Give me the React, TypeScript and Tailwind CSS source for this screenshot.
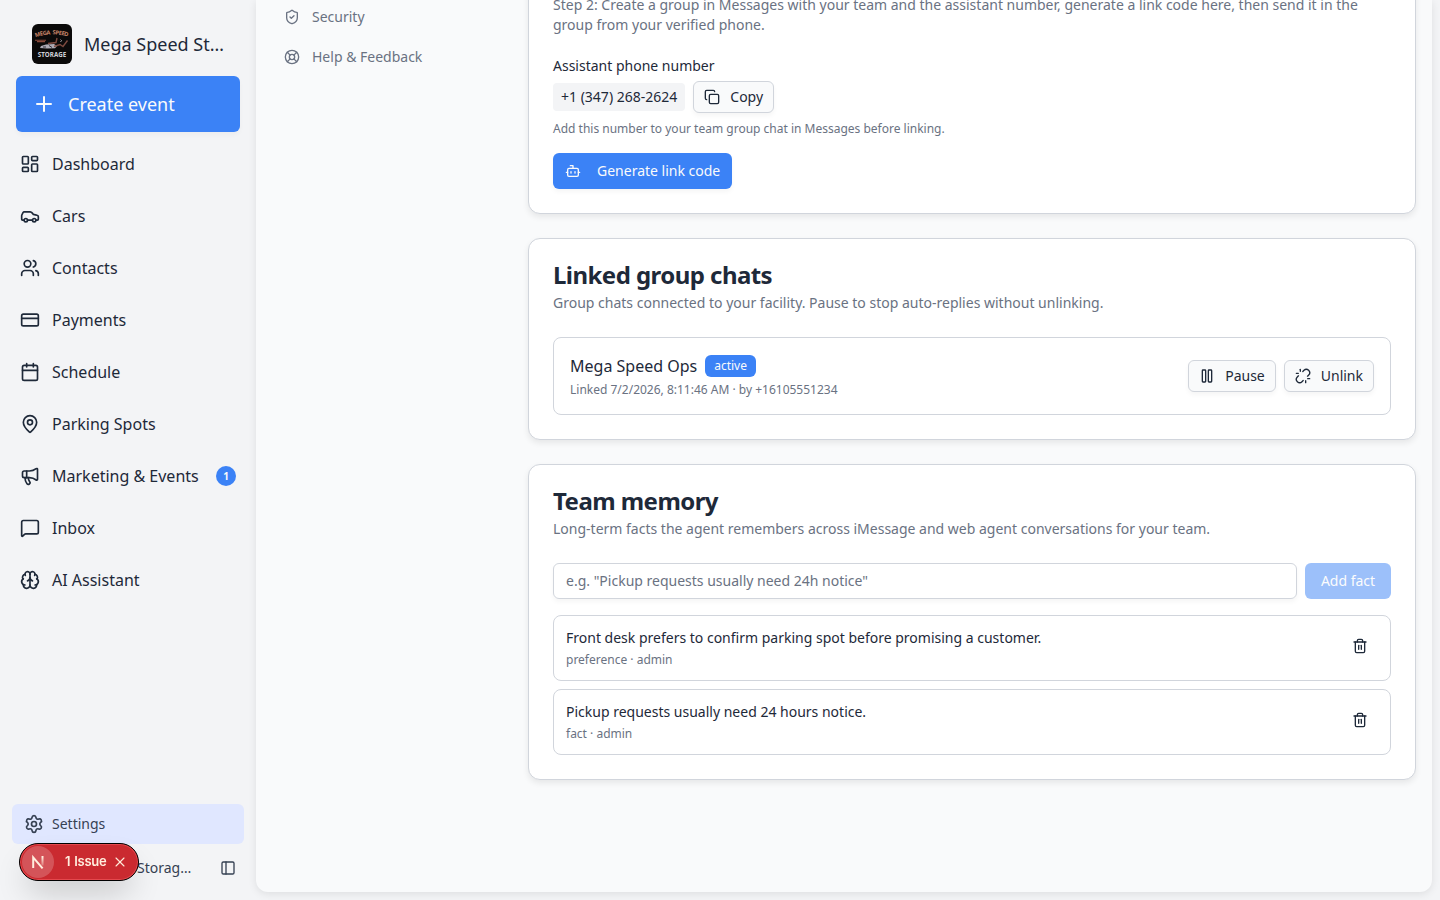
import {
  Bot,
  Brain,
  Calendar,
  Car,
  Copy,
  CreditCard,
  LayoutDashboard,
  LifeBuoy,
  MapPin,
  Megaphone,
  MessageSquare,
  PanelLeft,
  Pause,
  Plus,
  Settings,
  ShieldCheck,
  Trash2,
  Unlink,
  Users,
  X,
} from "lucide-react";
import type { ReactNode } from "react";

const NAV = [
  { label: "Dashboard", icon: LayoutDashboard },
  { label: "Cars", icon: Car },
  { label: "Contacts", icon: Users },
  { label: "Payments", icon: CreditCard },
  { label: "Schedule", icon: Calendar },
  { label: "Parking Spots", icon: MapPin },
  { label: "Marketing & Events", icon: Megaphone, badge: 1 },
  { label: "Inbox", icon: MessageSquare },
  { label: "AI Assistant", icon: Brain },
];

const FACTS = [
  {
    text: "Front desk prefers to confirm parking spot before promising a customer.",
    meta: "preference · admin",
  },
  { text: "Pickup requests usually need 24 hours notice.", meta: "fact · admin" },
];

function FacilityLogo() {
  return (
    <svg viewBox="0 0 40 40" className="size-10 shrink-0 rounded-md bg-[#0b0a0a]">
      <defs>
        <path id="arch" d="M3.5 13.3 Q20 7.5 38 13.3" />
      </defs>
      <text
        fontSize="5.8"
        fontWeight="700"
        fill="#c58468"
        fontFamily="Noto Sans"
        textLength="33"
        lengthAdjust="spacing"
        wordSpacing="1.5"
      >
        <textPath href="#arch">MEGA SPEED</textPath>
      </text>
      <path d="M3 16.3h11M5 17.6h8" stroke="#8a4a3a" strokeWidth="1.1" />
      <path d="M8 24l1-2 5-1.5 8-.5 3 2-2 2.2-8 .3z" fill="#aeabb5" />
      <path d="M11 23h3M17 21.5l3 2" stroke="#33313a" strokeWidth="1" />
      <path d="M16 19.5l8-1 1-4.5M22 22.5l6-2 3 2 4.5-6" stroke="#7d4a3f" strokeWidth="1.4" fill="none" />
      <path d="M28.5 15.5l1 1-1 1.5" stroke="#c9c6cd" strokeWidth=".8" fill="none" />
      <text
        x="20"
        y="32.8"
        textAnchor="middle"
        textLength="28.5"
        fontSize="6.2"
        fontWeight="700"
        fill="#d0d1d8"
        fontFamily="Noto Sans"
      >
        STORAGE
      </text>
    </svg>
  );
}

function Sidebar() {
  return (
    <aside className="flex w-64 shrink-0 flex-col">
      <div className="flex items-center gap-3 pt-6 pl-8">
        <FacilityLogo />
        <span className="w-[140px] truncate text-lg">Mega Speed Storage</span>
      </div>
      <button className="mx-4 mt-3 flex h-14 items-center gap-3 rounded-md bg-[#3b82f6] pl-4 text-lg text-gray-50 shadow-[0_3px_5px_rgba(0,0,0,0.03)]">
        <Plus className="size-6" />
        Create event
      </button>
      <nav className="mt-1.5 flex flex-col">
        {NAV.map(({ label, icon: Icon, badge }) => (
          <a key={label} className="flex h-13 items-center gap-3 pr-5 pl-5 text-base">
            <Icon className="size-5" />
            <span className="flex-1 whitespace-nowrap">{label}</span>
            {badge && (
              <span className="flex size-5 items-center justify-center rounded-full bg-[#3b82f6] text-[10px] font-bold text-gray-50">
                {badge}
              </span>
            )}
          </a>
        ))}
      </nav>
      <div className="mt-auto mb-2">
        <a className="mx-3 flex h-10 items-center gap-2 rounded-md bg-indigo-100 pl-3 text-sm text-gray-700">
          <Settings className="size-5" />
          Settings
        </a>
        <div className="flex h-12 items-center justify-between pr-5 pl-[137px]">
          <span className="text-sm whitespace-nowrap text-gray-700">Storag…</span>
          <PanelLeft className="size-4 text-gray-700" />
        </div>
      </div>
    </aside>
  );
}

function OutlineButton({ children }: { children: ReactNode }) {
  return (
    <button className="flex h-8 items-center gap-2 rounded-md border border-gray-300 bg-gray-50 px-2.5 text-sm shadow-[0_3px_5px_rgba(0,0,0,0.04)]">
      {children}
    </button>
  );
}

function CardHeader({ title, description }: { title: string; description: string }) {
  return (
    <div className="mb-6 flex flex-col gap-1.5">
      <h2 className="text-2xl leading-none font-bold tracking-[-0.023em]">{title}</h2>
      <p className="text-sm text-gray-500">{description}</p>
    </div>
  );
}

function Card({ children }: { children: ReactNode }) {
  return (
    <section className="rounded-xl border border-gray-300 bg-white p-6 shadow-[0_3px_6px_rgba(0,0,0,0.08)]">
      {children}
    </section>
  );
}

// Next.js dev overlay indicator
function IssuePill() {
  return (
    <div className="fixed bottom-[19px] left-[19px] flex h-[38px] w-[120px] items-center rounded-full border border-black bg-[#ca2a30] pl-[2px] font-['Inter'] text-[13px] font-semibold text-[#ffeede] shadow-[inset_0_0_0_1px_#e5484d,0_16px_32px_-8px_rgba(0,0,0,0.24)]">
      <span className="flex size-8 items-center justify-center rounded-full bg-white/20">
        <svg viewBox="0 0 16 16" fill="none" className="size-4">
          <defs>
            <linearGradient id="nStem" x1="12" y1="3" x2="12" y2="13" gradientUnits="userSpaceOnUse">
              <stop stopColor="#ffeede" />
              <stop offset="1" stopColor="#ffeede" stopOpacity="0.1" />
            </linearGradient>
          </defs>
          <path d="M3.2 14V3.4L12.6 14.4" stroke="#ffeede" strokeWidth="2" />
          <path d="M12.5 2v9.5" stroke="url(#nStem)" strokeWidth="2" />
        </svg>
      </span>
      <span className="ml-[11px] w-[42px] whitespace-nowrap tracking-[-0.02em] [word-spacing:1px]">1 Issue</span>
      <X className="ml-[5px] size-4" strokeWidth={1.6} />
    </div>
  );
}

export default function App() {
  return (
    <div className="flex h-screen overflow-hidden bg-gray-100 font-['Noto_Sans',sans-serif] text-gray-800">
      <Sidebar />
      <main className="mr-2 mb-2 flex flex-1 rounded-b-xl bg-gray-50 shadow-[0_2px_8px_rgba(0,0,0,0.09)]">
        <nav className="flex w-[272px] shrink-0 flex-col gap-5 pt-[7px] pl-7 text-sm text-gray-500">
          <a className="flex items-center gap-3">
            <ShieldCheck className="size-4" />
            Security
          </a>
          <a className="flex items-center gap-3">
            <LifeBuoy className="size-4" />
            Help &amp; Feedback
          </a>
        </nav>

        <div className="-mt-[30px] flex w-[888px] flex-col gap-6">
          <Card>
            <p className="text-sm text-gray-500">
              Step 2: Create a group in Messages with your team and the assistant number, generate a link code
              here, then send it in the group from your verified phone.
            </p>
            <p className="mt-[21px] text-sm">Assistant phone number</p>
            <div className="mt-[5px] flex items-center gap-2">
              <span className="rounded bg-gray-100 px-2 py-1 text-sm">+1 (347) 268-2624</span>
              <OutlineButton>
                <Copy className="mr-0.5 size-4" />
                Copy
              </OutlineButton>
            </div>
            <p className="mt-2 text-xs text-gray-500">
              Add this number to your team group chat in Messages before linking.
            </p>
            <button className="mt-4 flex h-9 items-center rounded-md bg-[#3b82f6] px-3 text-sm text-gray-50 shadow-[0_3px_5px_rgba(0,0,0,0.04)]">
              <Bot className="mr-4 size-4" />
              Generate link code
            </button>
          </Card>

          <Card>
            <CardHeader
              title="Linked group chats"
              description="Group chats connected to your facility. Pause to stop auto-replies without unlinking."
            />
            <div className="flex items-center justify-between rounded-lg border border-gray-300 p-4">
              <div>
                <div className="flex items-center gap-2">
                  <span className="text-base">Mega Speed Ops</span>
                  <span className="rounded-md bg-[#3b82f6] px-[9px] py-[3px] text-xs text-gray-50">active</span>
                </div>
                <p className="mt-1 text-xs text-gray-500">Linked 7/2/2026, 8:11:46 AM · by +16105551234</p>
              </div>
              <div className="flex gap-2">
                <OutlineButton>
                  <Pause className="mr-0.5 size-4" />
                  Pause
                </OutlineButton>
                <OutlineButton>
                  <Unlink className="mr-0.5 size-4" />
                  Unlink
                </OutlineButton>
              </div>
            </div>
          </Card>

          <Card>
            <CardHeader
              title="Team memory"
              description="Long-term facts the agent remembers across iMessage and web agent conversations for your team."
            />
            <div className="flex gap-2">
              <input
                className="h-9 flex-1 rounded-md border border-gray-300 px-3 pb-0.5 text-sm shadow-[0_3px_5px_rgba(0,0,0,0.04)] placeholder:text-gray-500"
                placeholder={'e.g. "Pickup requests usually need 24h notice"'}
              />
              <button className="h-9 w-[86px] rounded-md bg-[#3b82f6] text-sm text-gray-50 opacity-50" disabled>
                Add fact
              </button>
            </div>
            <ul className="mt-4 flex flex-col gap-2">
              {FACTS.map((fact) => (
                <li
                  key={fact.text}
                  className="flex items-start justify-between rounded-lg border border-gray-300 p-3"
                >
                  <div>
                    <p className="text-sm">{fact.text}</p>
                    <p className="mt-1 text-xs text-gray-500">{fact.meta}</p>
                  </div>
                  <button className="flex size-9 items-center justify-center">
                    <Trash2 className="size-4" />
                  </button>
                </li>
              ))}
            </ul>
          </Card>
        </div>
      </main>
      <IssuePill />
    </div>
  );
}
